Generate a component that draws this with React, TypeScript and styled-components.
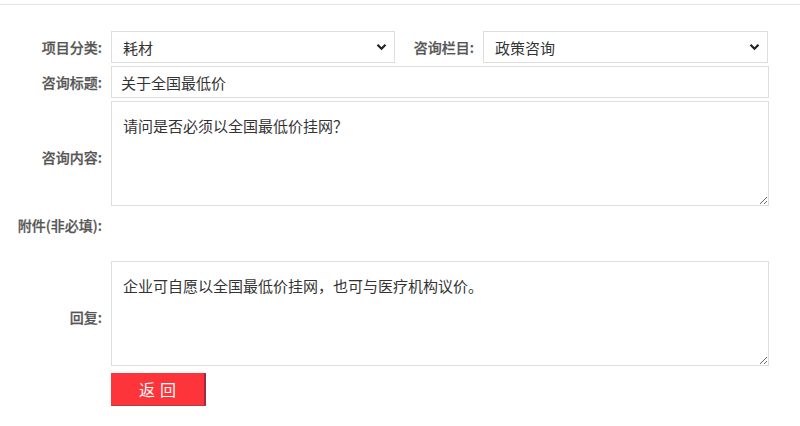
import React from "react";
import styled, { createGlobalStyle } from "styled-components";

const Global = createGlobalStyle`
  html, body { margin: 0; padding: 0; background: #fff; }
  body { font-family: "Noto Sans CJK SC", "Noto Sans", sans-serif; color: #333; }
  * { box-sizing: border-box; }
`;

const Page = styled.div`
  width: 800px;
  height: 426px;
  padding-top: 4px;
  background: #fff;
`;

const TopRule = styled.div`
  height: 1px;
  background: #e6e6e6;
`;

const Form = styled.div`
  display: grid;
  grid-template-columns: 102px 658px;
  column-gap: 9px;
  row-gap: 3px;
  padding-top: 26px;
`;

const Label = styled.div<{ $offset?: number; $top?: boolean }>`
  display: flex;
  align-items: ${(p) => (p.$top ? "flex-start" : "center")};
  justify-content: flex-end;
  white-space: nowrap;
  font-size: 14px;
  font-weight: 500;
  color: #555;
  padding-top: ${(p) => p.$offset ?? 0}px;
  line-height: 32px;
  -webkit-text-stroke: 0.25px #555;
`;

const InlineRow = styled.div`
  display: flex;
  align-items: center;
`;

const InlineLabel = styled(Label)`
  width: 64px;
  margin-left: 15px;
  margin-right: 9px;
`;

const SelectWrap = styled.div<{ $w: number }>`
  position: relative;
  width: ${(p) => p.$w}px;
  height: 32px;
`;

const Select = styled.select`
  appearance: none;
  -webkit-appearance: none;
  width: 100%;
  height: 100%;
  border: 1px solid #dedede;
  background: #fff;
  padding: 0 30px 0 11px;
  font-family: inherit;
  font-size: 15px;
  color: #333;
  outline: none;
`;

const Chevron = styled.svg`
  position: absolute;
  right: 8px;
  top: 12px;
  pointer-events: none;
`;

const TextInput = styled.input`
  width: 100%;
  height: 32px;
  border: 1px solid #dedede;
  padding: 0 9px;
  font-family: inherit;
  font-size: 15px;
  color: #333;
  outline: none;
`;

const Area = styled.textarea`
  display: block;
  width: 100%;
  height: 105px;
  border: 1px solid #dedede;
  padding: 12px 11px;
  font-family: inherit;
  font-size: 15px;
  line-height: 24px;
  color: #333;
  outline: none;
  resize: vertical;
`;

const Spacer = styled.div`
  height: 49px;
`;

const ButtonRow = styled.div`
  padding-top: 4px;
`;

const BackButton = styled.button`
  width: 95px;
  height: 33px;
  background: #fd353a;
  border: none;
  border-right: 2px solid #9b2c45;
  border-bottom: 1px solid #b33a4a;
  color: #fff;
  font-family: inherit;
  font-size: 16px;
  letter-spacing: 5px;
  padding: 0 0 0 5px;
  cursor: pointer;
`;

const Empty = styled.div``;

const ChevronIcon = () => (
  <Chevron width="11" height="8" viewBox="0 0 11 8">
    <path d="M1.5 1.8 L5.5 5.8 L9.5 1.8" fill="none" stroke="#222" strokeWidth="2.2" />
  </Chevron>
);

export default function App() {
  return (
    <Page>
      <Global />
      <TopRule />
      <Form>
        <Label>项目分类:</Label>
        <InlineRow>
          <SelectWrap $w={284}>
            <Select defaultValue="耗材">
              <option>耗材</option>
            </Select>
            <ChevronIcon />
          </SelectWrap>
          <InlineLabel>咨询栏目:</InlineLabel>
          <SelectWrap $w={285}>
            <Select defaultValue="政策咨询">
              <option>政策咨询</option>
            </Select>
            <ChevronIcon />
          </SelectWrap>
        </InlineRow>

        <Label>咨询标题:</Label>
        <TextInput readOnly defaultValue="关于全国最低价" />

        <Label $offset={7}>咨询内容:</Label>
        <Area readOnly defaultValue="请问是否必须以全国最低价挂网？" />

        <Label $top>附件(非必填):</Label>
        <Spacer />

        <Label $offset={7}>回复:</Label>
        <Area readOnly defaultValue="企业可自愿以全国最低价挂网，也可与医疗机构议价。" />

        <Empty />
        <ButtonRow>
          <BackButton>返回</BackButton>
        </ButtonRow>
      </Form>
    </Page>
  );
}
